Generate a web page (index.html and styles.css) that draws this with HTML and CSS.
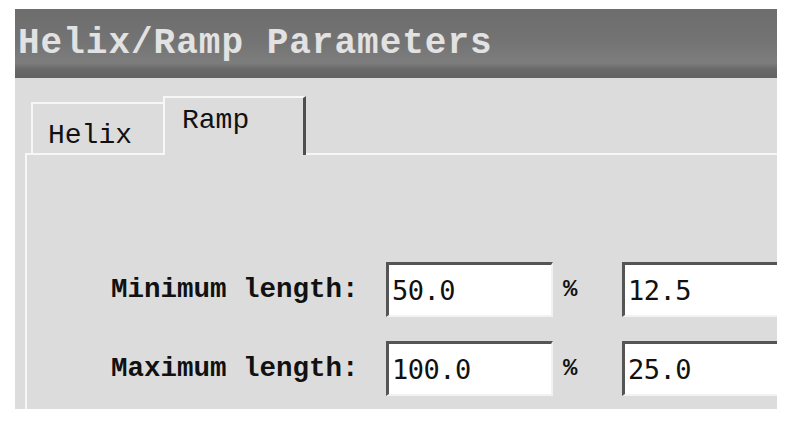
FILE: index.html
```html
<!DOCTYPE html>
<html lang="en">
  <head>
    <meta charset="UTF-8" />
    <title>Helix/Ramp Parameters</title>
    <link rel="stylesheet" href="styles.css">
  </head>
  <body>
    <div class="dialog">
      <div class="titlebar">Helix/Ramp Parameters</div>

      <div class="tabs">
        <div class="tab">Helix</div>
        <div class="tab active">Ramp</div>
      </div>

      <div class="panel">
        <div class="row">
          <label class="label">Minimum length:</label>
          <input type="text" class="field" value="50.0">
          <span class="pct">%</span>
          <input type="text" class="field wide" value="12.5">
        </div>
        <div class="row">
          <label class="label">Maximum length:</label>
          <input type="text" class="field" value="100.0">
          <span class="pct">%</span>
          <input type="text" class="field wide" value="25.0">
        </div>
      </div>
    </div>
  </body>
</html>
```

FILE: styles.css
```css
*{
  margin:0px;
  padding:0px;
  box-sizing:border-box;
}

body{
  background:#ffffff;
  font-family:"Liberation Mono", "DejaVu Sans Mono", monospace;
}

.dialog{
  margin:9px 0 0 15px;
  width:762px;
  height:400px;
  background:#dcdcdc;
  overflow:hidden;
}

.titlebar{
  height:69px;
  line-height:69px;
  padding-left:3px;
  font-size:36px;
  font-weight:bold;
  letter-spacing:1px;
  white-space:nowrap;
  color:#e2e2e2;
  background:linear-gradient(#6d6d6d 0%, #737373 45%, #7d7d7d 78%, #686868 88%, #626262 100%);
}

.tabs{
  display:flex;
  align-items:flex-end;
  margin-top:18px;
  padding-left:16px;
  position:relative;
  z-index:1;
}

.tab{
  height:51px;
  width:132px;
  padding:18px 0 0 15px;
  font-size:28px;
  line-height:28px;
  color:#111;
  background:#dcdcdc;
  border-top:2px solid #f7f7f7;
  border-left:2px solid #f7f7f7;
}

.tab.active{
  height:59px;
  width:143px;
  padding:9px 0 0 17px;
  border-right:3px solid #4e4e4e;
  margin-bottom:-2px;
}

.panel{
  margin-left:10px;
  height:260px;
  border-top:2px solid #f7f7f7;
  border-left:2px solid #f7f7f7;
  padding:107px 0 0 84px;
}

.row{
  display:flex;
  align-items:center;
  margin-bottom:24px;
}

.label{
  flex-shrink:0;
  width:275px;
  white-space:nowrap;
  font-size:27.5px;
  line-height:28px;
  font-weight:bold;
  color:#111;
}

.field{
  flex-shrink:0;
  width:167px;
  height:55px;
  padding:0 3px;
  font-family:"DejaVu Sans Mono", monospace;
  font-size:27px;
  letter-spacing:-0.5px;
  color:#111;
  background:#fff;
  border-top:3px solid #555;
  border-left:3px solid #555;
  border-right:2px solid #f2f2f2;
  border-bottom:2px solid #f2f2f2;
  outline:none;
}

.wide{
  width:200px;
}

.pct{
  flex-shrink:0;
  width:69px;
  padding-left:10px;
  font-size:24px;
  font-weight:bold;
  color:#111;
}
```
